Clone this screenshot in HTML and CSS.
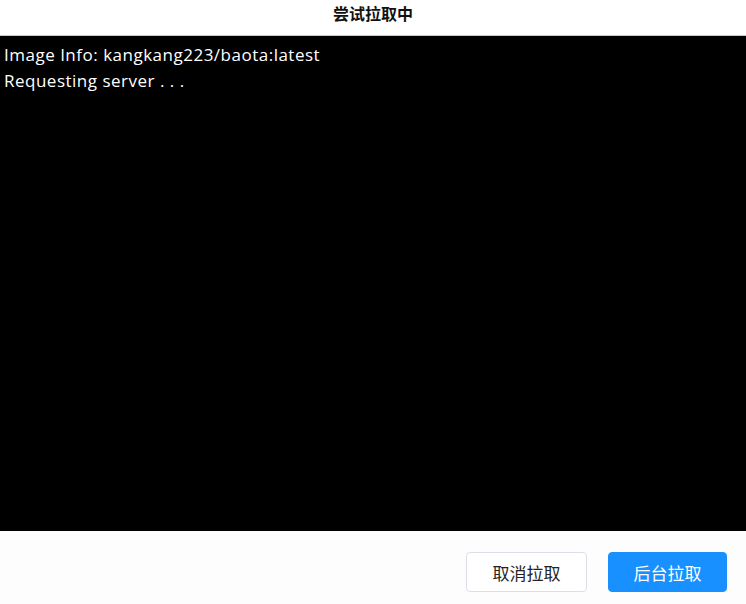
FILE: index.html
```html
<!DOCTYPE html>
<html lang="zh">
<head>
<meta charset="utf-8">
<title>尝试拉取中</title>
<link rel="stylesheet" href="styles.css">
</head>
<body>
<div class="dialog">
  <div class="header">尝试拉取中</div>
  <div class="console">
    <div class="line">Image Info: kangkang223/baota:latest</div>
    <div class="line">Requesting server . . .</div>
  </div>
  <div class="footer">
    <button class="btn btn-default">取消拉取</button>
    <button class="btn btn-primary">后台拉取</button>
  </div>
</div>
</body>
</html>
```
FILE: styles.css
```css
html, body {
  margin: 0;
  padding: 0;
  background: #ffffff;
}
.dialog {
  width: 746px;
  height: 604px;
  display: flex;
  flex-direction: column;
  font-family: "Open Sans", "Noto Sans CJK SC", sans-serif;
}
.header {
  height: 36px;
  flex: none;
  box-sizing: border-box;
  border-bottom: 1px solid #c8c8c8;
  text-align: center;
  font-size: 16px;
  font-weight: bold;
  line-height: 26px;
  color: #111;
  font-family: "Noto Sans CJK SC", sans-serif;
}
.console {
  height: 495px;
  flex: none;
  background: #000;
  color: #fff;
  padding: 6px 4px 0;
  box-sizing: border-box;
  font-size: 17px;
  line-height: 26px;
  font-family: "Open Sans", "Noto Sans CJK SC", sans-serif;
  letter-spacing: 0.5px;
}
.footer {
  flex: 1;
  display: flex;
  justify-content: flex-end;
  align-items: flex-start;
  gap: 21px;
  padding: 21px 19px 0 0;
  background: #fdfdfd;
}
.btn {
  height: 40px;
  box-sizing: border-box;
  border-radius: 4px;
  font-size: 17px;
  font-family: "Noto Sans CJK SC", sans-serif;
  padding: 0;
  cursor: pointer;
}
.btn-default {
  width: 121px;
  background: #fff;
  border: 1px solid #dcdfe6;
  color: #222;
}
.btn-primary {
  width: 119px;
  background: #1890ff;
  border: 1px solid #1890ff;
  color: #fff;
}
```
